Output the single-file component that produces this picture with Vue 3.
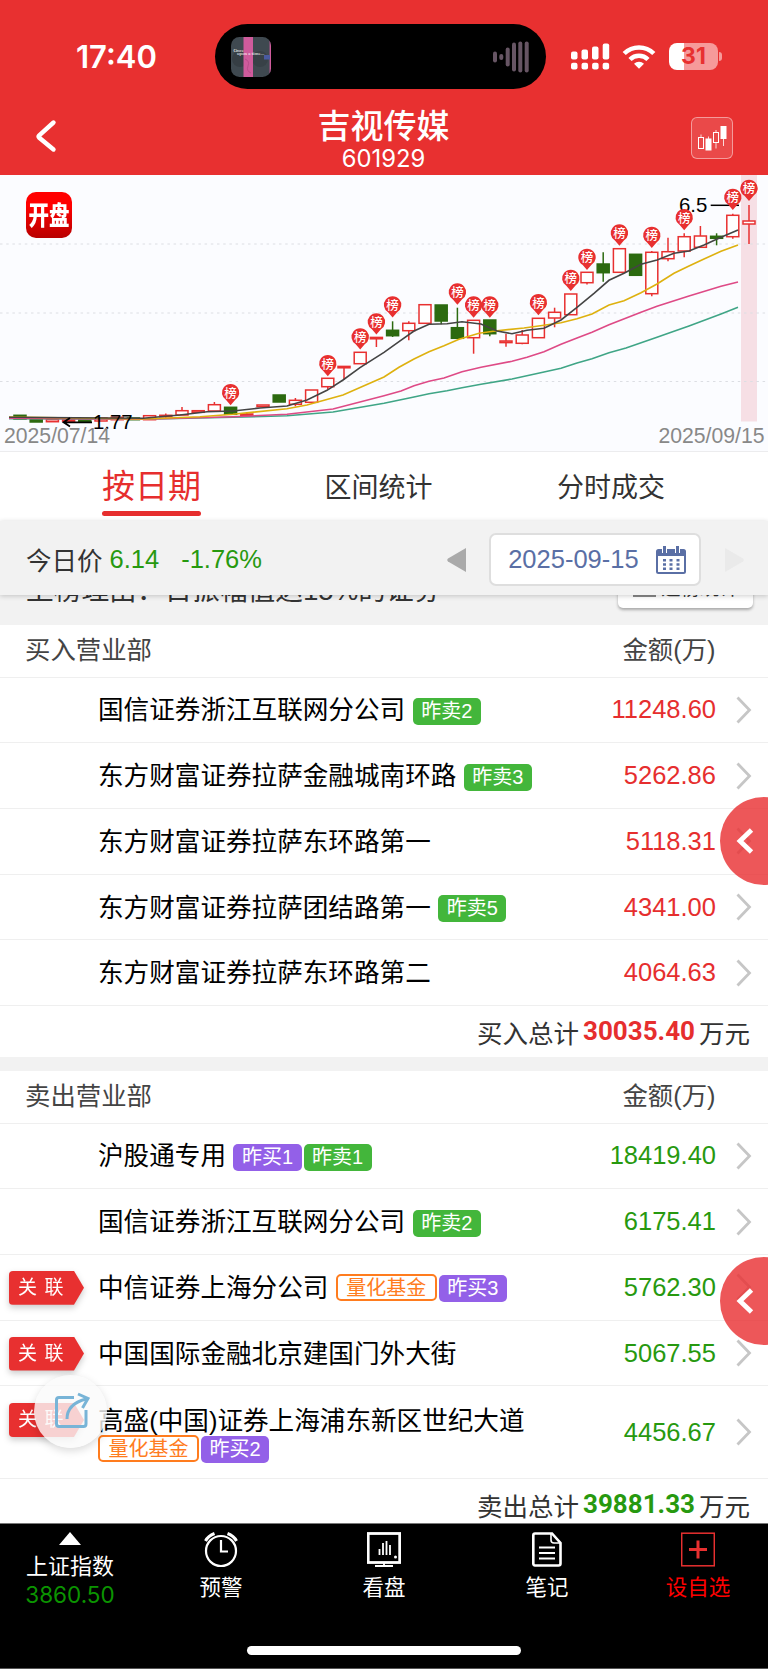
<script setup>
import { ref } from 'vue'

const tabs = ['按日期', '区间统计', '分时成交']
const activeTab = ref(0)

const sections = [
  {
    title: '买入营业部',
    totalLabel: '买入总计',
    total: '30035.40',
    dir: 'up',
    rows: [
      { name: '国信证券浙江互联网分公司', tags: [['sell', '昨卖2']], amount: '11248.60' },
      { name: '东方财富证券拉萨金融城南环路', tags: [['sell', '昨卖3']], amount: '5262.86' },
      { name: '东方财富证券拉萨东环路第一', tags: [], amount: '5118.31' },
      { name: '东方财富证券拉萨团结路第一', tags: [['sell', '昨卖5']], amount: '4341.00' },
      { name: '东方财富证券拉萨东环路第二', tags: [], amount: '4064.63' },
    ],
  },
  {
    title: '卖出营业部',
    totalLabel: '卖出总计',
    total: '39881.33',
    dir: 'down',
    rows: [
      { name: '沪股通专用', tags: [['buy', '昨买1'], ['sell', '昨卖1']], amount: '18419.40' },
      { name: '国信证券浙江互联网分公司', tags: [['sell', '昨卖2']], amount: '6175.41' },
      { name: '中信证券上海分公司', tags: [['fund', '量化基金'], ['buy', '昨买3']], amount: '5762.30', linked: true },
      { name: '中国国际金融北京建国门外大街', tags: [], amount: '5067.55', linked: true },
      { name: '高盛(中国)证券上海浦东新区世纪大道', tags: [['fund', '量化基金'], ['buy', '昨买2']], amount: '4456.67', linked: true, tall: true },
    ],
  },
]

// r = hollow red, g = solid green: [kind, body top, body bottom, high, low, marker tip]
const raw = [
  ['g', 240.3, 244], ['g', 243, 247], ['r', 244.7, 246.7], ['r', 244.8, 246.2],
  ['g', 243.7, 246.3], ['r', 243, 246], ['r', 242.3, 244.7], ['g', 243, 244.7],
  ['r', 240.7, 244.7], ['r', 240.3, 241.7, 238.5, 243], ['r', 235.7, 240, 232, 240], ['r', 235.7, 237.3],
  ['r', 229.7, 236, 227, 237], ['g', 232.3, 239.3, 232, 240, 230.3], ['r', 239, 240.5, 238, 241.7], ['r', 230, 231.7],
  ['g', 220, 227], ['r', 225.3, 229.3, 223, 231.3], ['r', 215, 227.3], ['r', 203.3, 211.7, 203, 214.5, 201.3],
  ['r', 191.4, 192.8, 192, 204.7], ['r', 177.3, 188.7, 177, 189, 174.5], ['r', 162.4, 163.8, 163, 172, 159.5], ['g', 155.3, 160.7, 146.3, 162, 142.5],
  ['r', 148.3, 155.7, 146.3, 165.3], ['r', 129.7, 148.3], ['g', 130, 146, 130, 149.3], ['g', 152.7, 163.3, 132.7, 163, 129.7],
  ['r', 145.3, 162.7, 145, 178.7, 142.7], ['g', 145, 158.7, 145, 161.3, 142.7], ['r', 166, 167.6, 158.7, 171.7], ['r', 160, 168.3, 155, 169.3],
  ['r', 143.3, 162.7, 143, 163, 140.3], ['r', 137.3, 143, 132.7, 152.3], ['r', 119, 139.7, 119, 140, 116], ['r', 97.3, 107.7, 97, 109.6, 95],
  ['g', 89, 97.7, 77.3, 106.7], ['r', 73.7, 97.3, 73, 98, 70.7], ['g', 79.3, 100.3], ['r', 77.3, 118.7, 76, 121.3, 73],
  ['r', 76.7, 83.7, 62.7, 86.3], ['r', 61.7, 76, 58.3, 82.3, 55.3], ['r', 61, 72.3, 51, 73], ['g', 61.3, 63.3, 58.3, 70.3],
  ['r', 40.3, 61.7, 38.7, 63.7, 35], ['r', 46, 49, 30, 69, 26],
]
const candles = raw.map(([kind, top, bottom, high = top, low = bottom, tip], i) => ({
  x: 20 + i * 16.2, kind, top, bottom, high, low, tip,
}))
const markers = candles.filter((c) => c.tip)

const averages = [
  { color: '#3fa586', points: '9,243.7 143,244.3 233,242.3 287,240.7 333,237 384,228.3 414,222 429,218.7 447,215.7 462,212.7 481,209.3 512,204 544,197 561,193.3 577,188 592,183.7 609,177.7 626,173 657,162.3 674,156.3 689,151 721,139 738,132.3' },
  { color: '#de4a86', points: '9,243.3 143,244.3 233,241.7 287,239.3 333,234 384,220.7 401,216 414,210.7 429,206.3 444,203 462,196.7 481,192.3 512,186.3 527,182.3 544,176.7 561,169.3 577,163 592,157.3 609,149.7 641,137.3 657,131.3 689,121 721,111.3 738,107' },
  { color: '#deb10f', points: '9,242 143,244 200,241.7 233,239.3 287,233.7 307,230 343,220 384,202 399,192.3 414,184 429,176.7 444,170.7 459,164.3 479,158.3 497,155.7 524,153 544,150.3 561,147.7 577,143.7 592,139 609,130 624,125.7 641,117.7 657,109 674,98.3 689,91 704,84 721,76.3 738,70' },
  { color: '#444', points: '9,242.3 143,243.3 180,240 207,236.7 233,236 260,233 287,231 307,225 327,215.3 343,205 360,192.7 384,177.3 399,166.7 414,156 429,149.3 447,148.7 462,146.7 481,149 497,156 512,158.7 527,155.3 544,153.3 561,145 577,132.3 594,118.3 609,105.3 624,98.3 641,89.3 657,85 674,78.3 689,76 704,70 721,62.3 738,55' },
]

const waves = [[0, 11], [6.3, 6], [12.7, 19], [19, 29], [25.3, 31], [31.7, 31]]
</script>

<template>
  <div class="page">
    <header class="header">
      <div class="status">
        <span class="time">17:40</span>
        <div class="island">
          <svg class="cover" viewBox="0 0 40 40">
            <defs><clipPath id="cover"><rect width="40" height="40" rx="8.5" /></clipPath></defs>
            <g clip-path="url(#cover)">
              <rect width="40" height="40" fill="#3f4950" />
              <circle cx="9" cy="22" r="8" fill="#363e44" />
              <circle cx="29" cy="22" r="8" fill="#384147" />
              <rect x="12.5" width="9.5" height="40" fill="#cf5b9c" />
              <path d="M14 22q5 2 3 7t3 7" fill="none" stroke="#b84d8a" />
              <rect x="38.6" width="1.4" height="40" fill="#cf5b9c" />
              <rect x="33" y="18" width="6" height="4.5" fill="#4a5aa0" />
              <text x="2.5" y="14.5">Once</text>
              <text x="6" y="18.3">upon a time...</text>
            </g>
          </svg>
          <svg class="wave" width="37" height="34">
            <rect v-for="w in waves" :key="w[0]" :x="w[0]" :y="17 - w[1] / 2" width="4" :height="w[1]" rx="2" fill="#675564" />
          </svg>
        </div>
        <svg class="signal" width="39" height="28" fill="#fff">
          <rect y="8.5" width="6.5" height="8" rx="2" /><rect x="10.5" y="6.5" width="6.5" height="10" rx="2" />
          <rect x="21" y="3.5" width="6.5" height="13" rx="2" /><rect x="31.7" y="0.5" width="6.5" height="16" rx="2" />
          <rect v-for="n in 4" :key="n" :x="(n - 1) * 10.55" y="19.8" width="6.5" height="6.8" rx="2" />
        </svg>
        <svg class="wifi" width="34" height="26" viewBox="0 0 34 26">
          <path d="M2.2 9.5a21 21 0 0 1 29.6 0M8 15.5a12.8 12.8 0 0 1 18 0" fill="none" stroke="#fff" stroke-width="4.5" />
          <path d="M12 19.7a7.3 7.3 0 0 1 10 0l-5 5z" fill="#fff" />
        </svg>
        <div class="battery"><span>31</span></div>
      </div>
      <nav class="nav">
        <svg class="back" width="24" height="36" viewBox="0 0 24 36"><path d="M19.5 4.5L5 17.5q-1 1 0 2L19.5 31.5" fill="none" stroke="#fff" stroke-width="4.4" stroke-linecap="round" /></svg>
        <div class="title">
          <h1>吉视传媒</h1>
          <p>601929</p>
        </div>
        <div class="kline">
          <svg width="40" height="40" fill="none" stroke="#fff">
            <path d="M9 16.5v3M16.5 18.5v3M24 12v3M24 25v5.500M31.500 20v8" opacity=".8" />
            <rect x="6.500" y="19.500" width="5" height="11" /><rect x="14" y="21" width="5" height="11" fill="#fff" />
            <rect x="21.500" y="14.500" width="5" height="10" /><rect x="29" y="8.500" width="5" height="12" fill="#fff" />
          </svg>
        </div>
      </nav>
    </header>

    <section class="chart">
      <svg width="768" height="276">
        <rect x="741" width="16" height="246.500" fill="#f6dfe5" />
        <path d="M0 69H768M0 138H768M0 206.500H768" stroke="#dcdee3" stroke-dasharray="2.500 3.700" />
        <g v-for="c in candles" :key="c.x" :class="c.kind">
          <path v-if="c.high < c.top" :d="`M${c.x} ${c.high}V${c.top}`" />
          <path v-if="c.low > c.bottom" :d="`M${c.x} ${c.bottom}V${c.low}`" />
          <rect :x="c.x - 6" :y="c.top" width="12" :height="c.bottom - c.top" />
        </g>
        <polyline v-for="a in averages" :key="a.color" :points="a.points" :stroke="a.color" fill="none" stroke-width="1.6" />
        <path d="M64 247.300H92M70 243L63.500 247.300L70 251.600" fill="none" stroke="#000" stroke-width="1.800" />
        <path d="M710.700 30.300H739" stroke="#000" stroke-width="1.500" />
        <text class="price" x="93" y="254.300">1.77</text>
        <text class="price" x="679" y="37">6.5</text>
        <g v-for="m in markers" :key="m.x" :transform="`translate(${m.x} ${m.tip})`">
          <path d="M0 0L-4.500 -5.200A8.700 8.700 0 1 1 4.500 -5.200Z" fill="#e83030" />
          <text class="mark" y="-7.800">榜</text>
        </g>
        <text class="day" x="4" y="268">2025/07/14</text>
        <text class="day" x="764.500" y="268" text-anchor="end">2025/09/15</text>
      </svg>
      <div class="logo"><span>开盘</span></div>
    </section>

    <div class="tabs">
      <button v-for="(t, i) in tabs" :key="t" :class="{ active: activeTab === i }" @click="activeTab = i">
        <span>{{ t }}</span>
      </button>
    </div>

    <div class="datebar">
      <span class="label">今日价</span>
      <span class="now">6.14</span>
      <span class="pct">-1.76%</span>
      <svg class="arrow" width="19" height="24"><path d="M19 0V24L1 13.500Q-.5 12 1 10.500Z" fill="#aaa" /></svg>
      <div class="picker">
        <span>2025-09-15</span>
        <svg width="30" height="28" viewBox="0 0 30 28">
          <rect x="1" y="4" width="28" height="23" rx="1.500" fill="#fff" stroke="#5a6fa5" stroke-width="2" />
          <path d="M1 4H29V10H1Z" fill="#5a6fa5" />
          <path d="M8.500 0V7M21.500 0V7" stroke="#fff" stroke-width="5" />
          <path d="M8.500 0V7M21.500 0V7" stroke="#5a6fa5" stroke-width="3" />
          <path d="M8.500 13V24M15 13V24M22 13V24" stroke="#5a6fa5" stroke-width="3" stroke-dasharray="2.500 1.700" />
        </svg>
      </div>
      <svg class="arrow" width="19" height="24"><path d="M0 0V24L18 13.500Q19.500 12 18 10.500Z" fill="#eaeaea" /></svg>
    </div>

    <div class="reason">
      <p>上榜理由：日振幅值达15%的证券</p>
      <button><i></i><span>追榜统计</span></button>
    </div>

    <main class="content">
      <section v-for="s in sections" :key="s.title" class="block" :class="s.dir">
        <div class="block-head"><span>{{ s.title }}</span><span>金额(万)</span></div>
        <div v-for="r in s.rows" :key="r.name" class="row" :class="{ tall: r.tall }">
          <div class="link"><span v-if="r.linked"><b>关联</b></span></div>
          <div class="name">
            <span class="name-text">{{ r.name }}</span>
            <span class="tags">
              <em v-for="t in r.tags" :key="t[1]" :class="t[0]">{{ t[1] }}</em>
            </span>
          </div>
          <span class="amount">{{ r.amount }}</span>
          <svg width="16" height="28"><path d="M1.500 1.500L13.500 14L1.500 26.500" fill="none" stroke="#c6c6c6" stroke-width="2.800" /></svg>
        </div>
        <div class="total">{{ s.totalLabel }}<strong>{{ s.total }}</strong>万元</div>
      </section>
    </main>

    <footer class="footer">
      <div class="item index">
        <svg width="22" height="13"><path d="M11 0L22 13H0Z" fill="#fff" /></svg>
        <span>上证指数</span>
        <span class="point">3860.50</span>
      </div>
      <div class="item">
        <svg width="34" height="36" fill="none" stroke="#fff" stroke-width="2.200">
          <circle cx="17" cy="19" r="15" /><path d="M17 8V19.500H24" />
          <path d="M1.500 9Q4 4 10.500 1.500M32.500 9Q30 4 23.500 1.500" stroke-width="3" />
        </svg>
        <span>预警</span>
      </div>
      <div class="item">
        <svg width="34" height="36" fill="none" stroke="#fff" stroke-width="2">
          <rect x="1.200" y="1.500" width="31.500" height="29" stroke-width="2.800" />
          <path d="M12.500 17V23M16 11V23M19.500 9V23M23 13V23M8 34H26M17 31V34" stroke-width="1.800" />
          <circle cx="28.500" cy="25" r="1.500" fill="#fff" stroke="none" />
        </svg>
        <span>看盘</span>
      </div>
      <div class="item">
        <svg width="30" height="36" fill="none" stroke="#fff" stroke-width="2.600">
          <path d="M3 1.500H20L28.500 11V31.500Q28.500 33.500 26.500 33.500H3Q1.300 33.500 1.300 31.500V3.500Q1.300 1.500 3 1.500Z" />
          <path d="M19 2V8Q19 11 22 11H28" stroke-width="1.600" />
          <path d="M7 15.500H23M7 21H23M7 26.500H23" stroke-width="2" />
        </svg>
        <span>笔记</span>
      </div>
      <div class="item red">
        <svg width="34" height="36" fill="none" stroke="#e83030">
          <rect x=".7" y="1.200" width="32.600" height="32.600" stroke-width="1.500" /><path d="M17 8.500V26.500M8 17.500H26" stroke-width="3" />
        </svg>
        <span>设自选</span>
      </div>
      <div class="home"></div>
    </footer>

    <div class="side first"><svg width="18" height="26"><path d="M15.500 2L4 13L15.500 24" fill="none" stroke="#fff" stroke-width="4.800" /></svg></div>
    <div class="side second"><svg width="18" height="26"><path d="M15.500 2L4 13L15.500 24" fill="none" stroke="#fff" stroke-width="4.800" /></svg></div>
    <div class="share">
      <svg width="36" height="38" fill="none" stroke="#78b4d7" stroke-width="3">
        <path d="M20 5.500H5Q2.500 5.500 2.500 8V32Q2.500 34.500 5 34.500H29.500Q32 34.500 32 32V18" />
        <path d="M13 27Q13 12 32 7M24 2L34 6.500L28.500 16" />
      </svg>
    </div>
  </div>
</template>

<style>
body {
  background: #fff;
}
</style>

<style scoped>
.page {
  position: relative;
  width: 768px;
  height: 1669px;
  overflow: hidden;
  display: flex;
  flex-direction: column;
  background: #fff;
  color: #333;
  font-family: "Liberation Sans", "Noto Sans CJK SC", sans-serif;
  font-size: 25.5px;
}

.page * {
  box-sizing: border-box;
}

h1,
p {
  margin: 0;
}

svg {
  display: block;
  flex: none;
}

button {
  border: none;
  padding: 0;
  background: none;
  color: inherit;
  font: inherit;
}

.header {
  flex: none;
  height: 175px;
  background: #e83030;
  color: #fff;
}

.status {
  height: 100px;
  padding: 24px 0 11px 76px;
  display: flex;
  align-items: center;
}

.time {
  width: 139px;
  font: 600 31px/36px Inter, sans-serif;
}

.island {
  width: 331px;
  height: 65px;
  border-radius: 33px;
  padding: 0 16px;
  display: flex;
  align-items: center;
  justify-content: space-between;
  background: #000;
}

.cover {
  width: 40px;
  height: 40px;
}

.cover text {
  fill: #fff;
  font: 5px "Liberation Serif", serif;
}

.signal {
  margin-left: 25px;
}

.wifi {
  margin-left: 12px;
}

.battery {
  position: relative;
  width: 49px;
  height: 27px;
  margin-left: 13px;
  border-radius: 8px;
  background: linear-gradient(90deg, #fff 15px, #f69a9a 15px);
  color: #e83030;
  font: 700 23px/27px Inter, sans-serif;
  text-align: center;
}

.battery::after {
  content: "";
  position: absolute;
  left: 50px;
  top: 9px;
  width: 3px;
  height: 9px;
  border-radius: 0 3px 3px 0;
  background: #f69a9a;
}

.nav {
  height: 75px;
  padding: 0 35px 0 34px;
  display: flex;
  align-items: center;
  justify-content: space-between;
}

.back {
  margin-bottom: 3px;
}

.title {
  text-align: center;
  margin: 2px 0 0 18px;
}

.title h1 {
  font: 500 33px/39px "Noto Sans CJK SC", sans-serif;
}

.title p {
  font: 23.8px/29px Inter, sans-serif;
}

.kline {
  width: 42px;
  height: 42px;
  border: 1px solid rgba(255, 255, 255, 0.45);
  border-radius: 6px;
  background: rgba(255, 255, 255, 0.12);
}

.chart {
  flex: none;
  position: relative;
  height: 277px;
  border-bottom: 1px solid #ececee;
  background: #fbfcff;
}

.r {
  fill: #fff;
  stroke: #e83030;
  stroke-width: 1.5;
}

.g {
  fill: #2c6a10;
  stroke: #2c6a10;
  stroke-width: 1.5;
}

.price {
  font-size: 20.4px;
  fill: #000;
}

.day {
  font-size: 21.2px;
  fill: #888;
}

.mark {
  font: 500 12.5px "Noto Sans CJK SC", sans-serif;
  fill: #fff;
  text-anchor: middle;
}

.logo {
  position: absolute;
  left: 26px;
  top: 17px;
  width: 46px;
  height: 46px;
  border-radius: 10px;
  background: linear-gradient(#ff0000 30%, #b80000);
  color: #fff;
  font: 900 20.5px/45px "Noto Sans CJK SC", sans-serif;
  text-align: center;
}

.logo span {
  display: block;
  transform: scaleY(1.25);
}

.tabs {
  flex: none;
  height: 69px;
  padding: 0 38px;
  display: grid;
  grid-template-columns: 227px 227px 238px;
  font-size: 27px;
}

.tabs button {
  display: flex;
  align-items: flex-start;
  justify-content: center;
}

.tabs span {
  height: 64px;
  line-height: 72px;
}

.tabs .active {
  color: #e62e2e;
  font-size: 33px;
}

.tabs .active span {
  position: relative;
  line-height: 70px;
}

.tabs .active span::after {
  content: "";
  position: absolute;
  left: 0;
  bottom: 0;
  width: 100%;
  height: 5px;
  border-radius: 3px;
  background: #e62e2e;
}

.datebar {
  flex: none;
  position: relative;
  z-index: 1;
  height: 74px;
  padding-left: 26px;
  display: flex;
  align-items: center;
  background: #f2f2f2;
  box-shadow: 0 1px 5px rgba(0, 0, 0, 0.2);
}

.now,
.pct {
  padding-top: 3px;
  color: #27990f;
}

.now {
  margin-left: 7px;
}

.pct {
  width: 266px;
  margin-left: 22px;
}

.arrow {
  margin-top: 3px;
}

.picker {
  width: 212px;
  height: 53px;
  margin: 3px 24px 0 23px;
  padding: 0 13px 0 17px;
  display: flex;
  align-items: center;
  justify-content: space-between;
  border: 2px solid #dedede;
  border-radius: 7px;
  background: #fff;
  color: #5a6fa5;
}

.reason {
  flex: none;
  height: 30px;
  overflow: hidden;
  padding: 0 15px 0 26px;
  display: flex;
  justify-content: space-between;
  align-items: flex-end;
  background: #f2f2f2;
}

.reason p {
  font-size: 27.7px;
  line-height: 40px;
  margin-bottom: 14px;
}

.reason button {
  width: 135px;
  height: 42px;
  margin-bottom: 17.5px;
  display: flex;
  align-items: center;
  gap: 5px;
  padding: 0 0 0 15px;
  border-radius: 5px;
  background: #fff;
  box-shadow: 0 2px 3px rgba(0, 0, 0, 0.3);
  font-size: 19.5px;
}

.reason i {
  width: 23px;
  height: 20px;
  background: #888;
}

.content {
  flex: none;
  height: 898px;
  overflow: hidden;
}

.block + .block {
  border-top: 14px solid #f2f2f2;
}

.block-head {
  height: 52.6px;
  padding: 0 52.5px 6px 25px;
  display: flex;
  justify-content: space-between;
  align-items: center;
  border-bottom: 1.5px solid #efefef;
  font-size: 25.4px;
  color: #444;
}

.row {
  height: 65.7px;
  display: flex;
  align-items: center;
  padding-right: 16px;
  border-bottom: 1.5px solid #efefef;
  color: #000;
}

.link {
  width: 98px;
  padding: 1px 0 0 9px;
}

.link span {
  display: block;
  width: 75px;
  filter: drop-shadow(0 3px 3px rgba(0, 0, 0, 0.2));
}

.link b {
  display: block;
  height: 34px;
  padding-left: 9px;
  border-radius: 4px;
  background: #e83030;
  clip-path: polygon(0 0, 65px 0, 75px 50%, 65px 100%, 0 100%);
  color: #fff;
  font-weight: 400;
  font-size: 19px;
  line-height: 34px;
  letter-spacing: 7.5px;
  white-space: nowrap;
}

.name {
  flex: 1;
  display: flex;
  align-items: center;
  white-space: nowrap;
}

.name-text {
  padding-top: 1px;
  font-size: 25.6px;
  line-height: 36px;
}

.tags {
  display: flex;
  gap: 2px;
  margin: 3px 0 0 7.5px;
}

.tags em {
  height: 27px;
  padding: 0 8.5px;
  border-radius: 5px;
  color: #fff;
  font-style: normal;
  font-size: 20px;
  line-height: 26px;
}

.tags .sell {
  background: #43b63b;
}

.tags .buy {
  background: #9360e8;
}

.tags .fund {
  margin: -1px 0 1px;
  border: 2px solid #ff7c1e;
  background: #fff;
  color: #ff7c1e;
  line-height: 24px;
}

.tall {
  height: 93px;
}

.tall .link {
  padding-bottom: 26px;
}

.tall .name {
  flex-direction: column;
  align-items: flex-start;
}

.tall .tags {
  margin: -3px 0 0;
}

.amount {
  margin-right: 20px;
}

.up .amount,
.up strong {
  color: #e62e2e;
}

.down .amount,
.down strong {
  color: #27990f;
}

.total {
  height: 51px;
  padding: 0 18px 1px 0;
  display: flex;
  align-items: center;
  justify-content: flex-end;
}

.total strong {
  margin: 0 4px;
  font: 700 26px/50px Roboto, sans-serif;
}

.footer {
  flex: none;
  position: relative;
  height: 146px;
  display: grid;
  grid-template-columns: 140px 162px 164px 162px 140px;
  border-top: 1px solid #777;
  border-bottom: 1px solid #555;
  background: #000;
  color: #fff;
  font-size: 21.5px;
}

.item {
  padding-top: 8px;
  display: flex;
  flex-direction: column;
  align-items: center;
}

.item span {
  margin-top: 4px;
  line-height: 32px;
}

.index span {
  margin-top: 6px;
  font-size: 22px;
  line-height: 31px;
}

.index .point {
  margin-top: -1px;
  color: #0b9400;
  font: 22.5px/27px Inter, sans-serif;
}

.red {
  color: #f00;
}

.home {
  position: absolute;
  left: 247px;
  top: 122px;
  width: 274px;
  height: 9px;
  border-radius: 5px;
  background: #fff;
}

.side {
  position: absolute;
  left: 720px;
  width: 88px;
  height: 88px;
  padding: 31px 0 0 16px;
  border-radius: 50%;
  background: rgba(233, 50, 52, 0.82);
}

.first {
  top: 797px;
}

.second {
  top: 1257px;
}

.share {
  position: absolute;
  left: 34px;
  top: 1375px;
  width: 73px;
  height: 73px;
  padding: 17px 0 0 20px;
  border-radius: 50%;
  background: rgba(250, 250, 250, 0.8);
  box-shadow: 0 3px 8px rgba(0, 0, 0, 0.15);
}
</style>
